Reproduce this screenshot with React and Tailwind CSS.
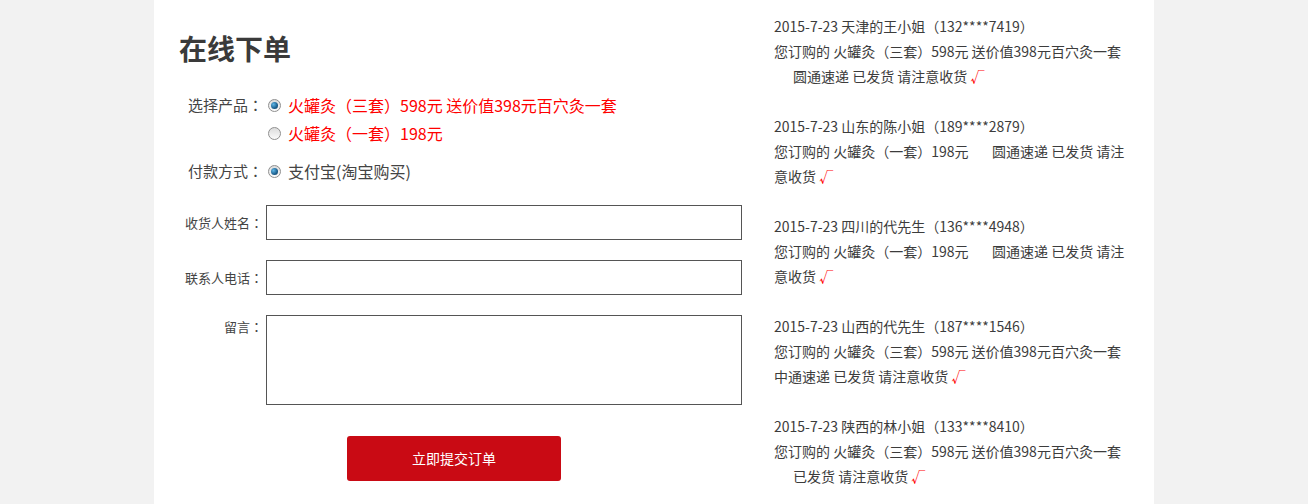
import { useState } from "react";

const FONT = { fontFamily: '"Microsoft YaHei", "Noto Sans CJK SC", "Noto Sans", sans-serif' };

const ORDERS = [
  {
    head: "2015-7-23 天津的王小姐（132****7419）",
    body: "您订购的 火罐灸（三套）598元 送价值398元百穴灸一套",
    tail: "圆通速递 已发货 请注意收货",
    indent: true,
  },
  {
    head: "2015-7-23 山东的陈小姐（189****2879）",
    body: "您订购的 火罐灸（一套）198元",
    bodyExtra: "圆通速递 已发货 请注",
    tail: "意收货",
  },
  {
    head: "2015-7-23 四川的代先生（136****4948）",
    body: "您订购的 火罐灸（一套）198元",
    bodyExtra: "圆通速递 已发货 请注",
    tail: "意收货",
  },
  {
    head: "2015-7-23 山西的代先生（187****1546）",
    body: "您订购的 火罐灸（三套）598元 送价值398元百穴灸一套",
    tail: "中通速递 已发货 请注意收货",
  },
  {
    head: "2015-7-23 陕西的林小姐（133****8410）",
    body: "您订购的 火罐灸（三套）598元 送价值398元百穴灸一套",
    tail: "已发货 请注意收货",
    indent: true,
  },
];

// full-width colon centred like the reference font
const Colon = () => (
  <span style={{ fontFamily: '"Noto Sans CJK TC", sans-serif' }}>：</span>
);

const Radio = ({ checked, onClick }) => (
  <span
    onClick={onClick}
    className="relative inline-flex w-[13px] h-[13px] shrink-0 items-center justify-center rounded-full border border-[#8f8f8f] bg-gradient-to-b from-[#dcdcdc] to-[#fbfbfb] cursor-pointer"
  >
    {checked && (
      <span className="w-[7px] h-[7px] rounded-full bg-[radial-gradient(circle_at_35%_35%,#5fb6e6,#1b5f8e_60%,#0d3b5c)]" />
    )}
  </span>
);

const FieldLabel = ({ children, className = "" }) => (
  <div className={`w-[84px] shrink-0 text-right text-[13px] text-[#444] ${className}`}>
    {children}
    <Colon />
  </div>
);

export default function App() {
  const [product, setProduct] = useState(0);

  return (
    <div className="min-h-[504px] bg-[#f2f2f2]" style={FONT}>
      <div className="w-[1000px] h-[504px] mx-auto bg-white flex overflow-hidden">
        {/* left: order form */}
        <div className="w-[620px] shrink-0 pl-[25px] pt-[30px]">
          <h1 className="text-[28px] leading-[36px] font-bold text-[#3a3a3a]">在线下单</h1>

          <div className="flex mt-[25px]">
            <div className="w-[84px] shrink-0 text-right text-[15px] leading-[28px] text-[#444]">
              选择产品<Colon />
            </div>
            <div className="pl-[5px]">
              <div className="flex items-center h-[28px] gap-[7px]">
                <Radio checked={product === 0} onClick={() => setProduct(0)} />
                <span className="text-[16px] text-[#ff0000]">火罐灸（三套）598元 送价值398元百穴灸一套</span>
              </div>
              <div className="flex items-center h-[28px] gap-[7px]">
                <Radio checked={product === 1} onClick={() => setProduct(1)} />
                <span className="text-[16px] text-[#ff0000]">火罐灸（一套）198元</span>
              </div>
            </div>
          </div>

          <div className="flex mt-[10px]">
            <div className="w-[84px] shrink-0 text-right text-[15px] leading-[28px] text-[#444]">
              付款方式<Colon />
            </div>
            <div className="pl-[5px] flex items-center h-[28px] gap-[7px]">
              <Radio checked />
              <span className="text-[16px] text-[#444]">支付宝(淘宝购买)</span>
            </div>
          </div>

          <div className="flex items-center mt-[20px] gap-[3px]">
            <FieldLabel>收货人姓名</FieldLabel>
            <input className="w-[476px] h-[35px] border border-[#555] outline-none px-2 text-[13px]" />
          </div>

          <div className="flex items-center mt-[20px] gap-[3px]">
            <FieldLabel>联系人电话</FieldLabel>
            <input className="w-[476px] h-[35px] border border-[#555] outline-none px-2 text-[13px]" />
          </div>

          <div className="flex items-start mt-[20px] gap-[3px]">
            <FieldLabel className="leading-[24px]">留言</FieldLabel>
            <textarea className="w-[476px] h-[90px] border border-[#555] outline-none resize-none p-2 text-[13px] block" />
          </div>

          <div className="mt-[31px] pl-[168px]">
            <button className="w-[214px] h-[45px] rounded-[3px] bg-[#c90a14] text-white text-[14px]">
              立即提交订单
            </button>
          </div>
        </div>

        {/* right: recent orders */}
        <div className="w-[360px] shrink-0 pt-[14px] text-[14px] leading-[25px] text-[#3c3c3c] whitespace-nowrap">
          {ORDERS.map((o, i) => (
            <div key={i} className="mb-[25px]">
              <div>{o.head}</div>
              <div>
                {o.bodyExtra ? (
                  <>
                    <span className="inline-block w-[218px]">{o.body}</span>
                    <span>{o.bodyExtra}</span>
                  </>
                ) : (
                  o.body
                )}
              </div>
              <div className={o.indent ? "pl-[19px]" : ""}>
                {o.tail} <span className="text-[#ff0000]">√</span>
              </div>
            </div>
          ))}
        </div>
      </div>
    </div>
  );
}
